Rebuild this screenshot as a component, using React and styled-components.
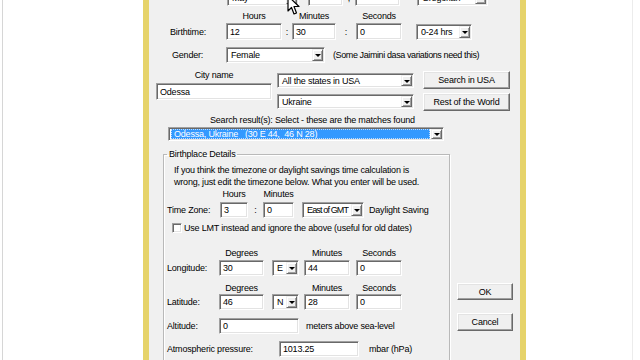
import React from 'react';
import styled, { createGlobalStyle } from 'styled-components';

const FACE = '#f0f0f0';
const YELLOW = '#e6d36a';

const Global = createGlobalStyle`
  html, body { margin: 0; padding: 0; background: #fff; }
  body { overflow: hidden; font-family: "Liberation Sans", Arial, sans-serif; }
  * { box-sizing: border-box; }
`;

const Screen = styled.div`
  position: relative;
  width: 640px;
  height: 360px;
  overflow: hidden;
  background: #fff;
  display: flex;
`;

const Backdrop = styled.div`
  margin-left: 2px;
  width: 631px;
  height: 360px;
  border-left: 1px solid #d6d6d6;
  border-right: 1px solid #ececec;
  display: flex;
  padding-left: 140px;
`;

const Dialog = styled.div`
  width: 383px;
  height: 380px;
  flex-shrink: 0;
  border-left: 6px solid ${YELLOW};
  border-right: 6px solid ${YELLOW};
  background: ${FACE};
  display: flex;
  flex-direction: column;
  font-size: 9px;
  letter-spacing: -0.2px;
  color: #000;
`;

const Row = styled.div`
  display: flex;
  align-items: ${(p) => p.$align || 'center'};
  height: ${(p) => p.$h}px;
  margin-top: ${(p) => p.$mt || 0}px;
  padding-left: ${(p) => p.$pl || 0}px;
  flex-shrink: 0;
`;

const Cell = styled.span`
  display: block;
  width: ${(p) => (p.$w ? `${p.$w}px` : 'auto')};
  margin-left: ${(p) => p.$ml || 0}px;
  text-align: ${(p) => p.$center ? 'center' : 'left'};
  letter-spacing: ${(p) => (p.$ls !== undefined ? `${p.$ls}px` : 'inherit')};
  white-space: pre;
  line-height: 10px;
  flex-shrink: 0;
`;

const sunken = `
  background: #fff;
  border: 1px solid;
  border-color: #a0a0a0 #fff #fff #a0a0a0;
  box-shadow: inset 1px 1px 0 #696969, inset -1px -1px 0 #e3e3e3;
`;

const Edit = styled.div`
  ${sunken}
  width: ${(p) => p.$w}px;
  height: ${(p) => p.$h || 16}px;
  margin-left: ${(p) => p.$ml || 0}px;
  margin-top: ${(p) => p.$mt || 0}px;
  padding-left: 3px;
  display: flex;
  align-items: center;
  line-height: 10px;
  white-space: pre;
  overflow: hidden;
  flex-shrink: 0;
`;

const ComboBox = styled.div`
  ${sunken}
  width: ${(p) => p.$w}px;
  height: ${(p) => p.$h || 16}px;
  margin-left: ${(p) => p.$ml || 0}px;
  margin-top: ${(p) => p.$mt || 0}px;
  padding: 1px 1px 1px 2px;
  display: flex;
  align-items: stretch;
  line-height: 10px;
  flex-shrink: 0;
`;

const ComboText = styled.span`
  flex: 1;
  min-width: 0;
  display: flex;
  align-items: center;
  padding-left: ${(p) => (p.$selected ? 2 : 1)}px;
  margin-right: 1px;
  white-space: pre;
  overflow: hidden;
  letter-spacing: ${(p) => (p.$ls !== undefined ? `${p.$ls}px` : 'inherit')};
  color: ${(p) => (p.$selected ? '#fff' : '#000')};
  background: ${(p) => (p.$selected ? '#3399ff' : 'transparent')};
  border: 1px ${(p) => (p.$selected ? 'dotted #bcdcff' : 'solid transparent')};
`;

const ArrowButton = styled.span`
  width: 11px;
  flex-shrink: 0;
  background: ${FACE};
  border: 1px solid;
  border-color: ${FACE} #696969 #696969 ${FACE};
  box-shadow: inset 1px 1px 0 #fff, inset -1px -1px 0 #a0a0a0;
  display: flex;
  align-items: center;
  justify-content: center;
  &::after {
    content: '';
    display: block;
    width: 0;
    height: 0;
    margin-top: 1px;
    border-left: 3px solid transparent;
    border-right: 3px solid transparent;
    border-top: 3px solid #000;
  }
`;

const Button = styled.div`
  width: ${(p) => p.$w}px;
  height: ${(p) => p.$h}px;
  margin-top: ${(p) => p.$mt || 0}px;
  background: ${FACE};
  border: 1px solid;
  border-color: #fff #696969 #696969 #fff;
  box-shadow: inset -1px -1px 0 #a0a0a0, inset 1px 1px 0 #e3e3e3;
  display: flex;
  align-items: center;
  justify-content: center;
  line-height: 10px;
  white-space: pre;
  flex-shrink: 0;
`;

const Column = styled.div`
  display: flex;
  flex-direction: column;
  width: ${(p) => p.$w}px;
  margin-left: ${(p) => p.$ml || 0}px;
  padding-top: ${(p) => p.$pt || 0}px;
  flex-shrink: 0;
`;

const ColumnLabel = styled.span`
  display: block;
  height: 9px;
  line-height: 9px;
  text-align: center;
  white-space: pre;
`;

const Section = styled.div`
  display: flex;
  margin-top: ${(p) => p.$mt || 0}px;
  flex-shrink: 0;
`;

const GroupBox = styled.fieldset`
  width: 287px;
  height: 240px;
  margin: 0 0 0 14px;
  padding: 0;
  border: 1px solid #b9b9b9;
  box-shadow: 1px 1px 0 #fff, inset 1px 1px 0 #fff;
  display: flex;
  flex-direction: column;
  min-inline-size: 0;
`;

const Legend = styled.legend`
  margin-left: 3px;
  padding: 0 2px;
  height: 10px;
  line-height: 10px;
  font-size: 9px;
  white-space: pre;
`;

const Note = styled.p`
  margin: ${(p) => p.$mt || 0}px 0 0 10px;
  line-height: 12px;
  white-space: pre;
`;

const CheckBox = styled.span`
  ${sunken}
  width: 10px;
  height: 10px;
  margin-left: ${(p) => p.$ml || 0}px;
  flex-shrink: 0;
`;

const Cursor = styled.svg`
  position: absolute;
  left: 287px;
  top: -5px;
  width: 13px;
  height: 21px;
`;

function Combo({ w, h, ml, mt, ls, children, selected }) {
  return (
    <ComboBox $w={w} $h={h} $ml={ml} $mt={mt}>
      <ComboText $selected={selected} $ls={ls}>{children}</ComboText>
      <ArrowButton />
    </ComboBox>
  );
}

export default function App() {
  return (
    <Screen>
      <Global />
      <Backdrop>
        <Dialog>
          {/* date row, cut at the top */}
          <Row $h={17} $mt={-11}>
            <Combo w={72} h={17} ml={78}>May</Combo>
            <Edit $w={35} $h={17} $ml={9} />
            <Cell $w={12} $center>,</Cell>
            <Edit $w={45} $h={17} />
            <Combo w={71} h={17} ml={17}>Gregorian</Combo>
          </Row>

          <Row $h={10} $mt={5}>
            <Cell $w={56} $ml={77} $center>Hours</Cell>
            <Cell $w={44} $ml={10} $center>Minutes</Cell>
            <Cell $w={46} $ml={20} $center>Seconds</Cell>
          </Row>

          <Row $h={17} $mt={2}>
            <Cell $w={56} $ml={21}>Birthtime:</Cell>
            <Edit $w={56} $h={17}>12</Edit>
            <Cell $w={10} $center>:</Cell>
            <Edit $w={44} $h={17}>30</Edit>
            <Cell $w={20} $center>:</Cell>
            <Edit $w={46} $h={17}>0</Edit>
            <Combo w={56} ml={14}>0-24 hrs</Combo>
          </Row>

          <Row $h={16} $mt={7}>
            <Cell $w={54} $ml={23}>Gender:</Cell>
            <Combo w={99}>Female</Combo>
            <Cell $ml={8} $ls={-0.4}>(Some Jaimini dasa variations need this)</Cell>
          </Row>

          <Row $h={40} $mt={8} $align="flex-start">
            <Column $w={116} $ml={7}>
              <ColumnLabel>City name</ColumnLabel>
              <Edit $w={116} $h={17} $mt={3}>Odessa</Edit>
            </Column>
            <Column $w={137} $ml={5}>
              <Combo w={137} h={15} mt={2}>All the states in USA</Combo>
              <Combo w={137} h={15} mt={6}>Ukraine</Combo>
            </Column>
            <Column $w={87} $ml={9}>
              <Button $w={87} $h={18}>Search in USA</Button>
              <Button $w={87} $h={18} $mt={4}>Rest of the World</Button>
            </Column>
          </Row>

          <Row $h={10} $mt={4}>
            <Cell $ml={61}>Search result(s): Select - these are the matches found</Cell>
          </Row>

          <Row $h={14} $mt={2}>
            <Combo w={276} h={14} ml={19} selected>
              {'Odessa, Ukraine   (30 E 44,  46 N 28)'}
            </Combo>
          </Row>

          <Section $mt={8}>
            <GroupBox>
              <Legend>Birthplace Details</Legend>
              <Note $mt={5}>
                {'If you think the timezone or daylight savings time calculation is\nwrong, just edit the timezone below. What you enter will be used.'}
              </Note>
              <Row $h={10} $mt={1}>
                <Cell $w={28} $ml={56} $center>Hours</Cell>
                <Cell $w={31} $ml={15} $center>Minutes</Cell>
              </Row>
              <Row $h={17} $mt={2}>
                <Cell $w={53} $ml={3}>Time Zone:</Cell>
                <Edit $w={28} $h={16}>3</Edit>
                <Cell $w={15} $center>:</Cell>
                <Edit $w={31} $h={16}>0</Edit>
                <Combo w={62} ml={8} ls={-0.85}>East of GMT</Combo>
                <Cell $ml={5}>Daylight Saving</Cell>
              </Row>
              <Row $h={11} $mt={4}>
                <CheckBox $ml={8} />
                <Cell $ml={2}>Use LMT instead and ignore the above (useful for old dates)</Cell>
              </Row>
              <Row $h={10} $mt={15}>
                <Cell $w={45} $ml={55} $center>Degrees</Cell>
                <Cell $w={46} $ml={40} $center>Minutes</Cell>
                <Cell $w={46} $ml={6} $center>Seconds</Cell>
              </Row>
              <Row $h={16} $mt={2}>
                <Cell $w={52} $ml={3}>Longitude:</Cell>
                <Edit $w={45}>30</Edit>
                <Combo w={27} ml={8}>E</Combo>
                <Edit $w={46} $ml={5}>44</Edit>
                <Edit $w={46} $ml={6}>0</Edit>
              </Row>
              <Row $h={10} $mt={7}>
                <Cell $w={45} $ml={55} $center>Degrees</Cell>
                <Cell $w={46} $ml={40} $center>Minutes</Cell>
                <Cell $w={46} $ml={6} $center>Seconds</Cell>
              </Row>
              <Row $h={16} $mt={1}>
                <Cell $w={52} $ml={3}>Latitude:</Cell>
                <Edit $w={45}>46</Edit>
                <Combo w={27} ml={8}>N</Combo>
                <Edit $w={46} $ml={5}>28</Edit>
                <Edit $w={46} $ml={6}>0</Edit>
              </Row>
              <Row $h={16} $mt={8}>
                <Cell $w={52} $ml={3}>Altitude:</Cell>
                <Edit $w={80}>0</Edit>
                <Cell $ml={7}>meters above sea-level</Cell>
              </Row>
              <Row $h={16} $mt={7}>
                <Cell $w={112} $ml={3}>Atmospheric pressure:</Cell>
                <Edit $w={80}>1013.25</Edit>
                <Cell $ml={10}>mbar (hPa)</Cell>
              </Row>
            </GroupBox>
            <Column $w={56} $ml={7} $pt={134}>
              <Button $w={56} $h={17}>OK</Button>
              <Button $w={56} $h={18} $mt={13}>Cancel</Button>
            </Column>
          </Section>
        </Dialog>
      </Backdrop>
      <Cursor viewBox="0 0 13 21">
        <path d="M1 1 L1 16 L4.5 12.5 L7 19 L9.5 18 L7 11.5 L12 11.5 Z" fill="#fff" stroke="#000" strokeWidth="1.2" strokeLinejoin="round" />
      </Cursor>
    </Screen>
  );
}
